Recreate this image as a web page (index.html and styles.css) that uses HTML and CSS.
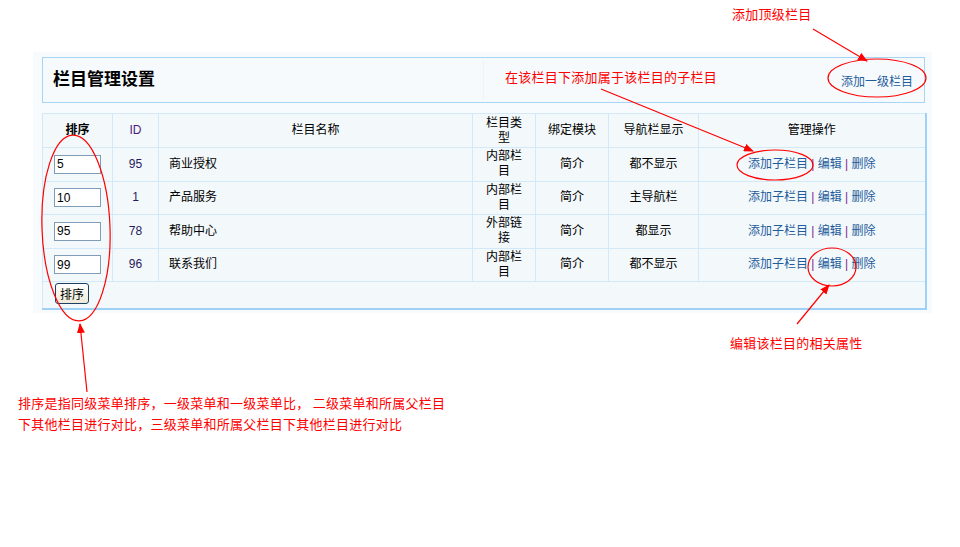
FILE: index.html
```html
<!DOCTYPE html>
<html lang="zh-CN">
<head>
    <meta charset="UTF-8">
    <meta name="viewport" content="width=device-width, initial-scale=1.0">
    <title>栏目管理设置</title>
    <link rel="stylesheet" href="styles.css">
</head>
<body>
<div class="page">

    <div class="panel">
        <!-- 标题栏 -->
        <div class="title-bar">
            <h2 class="title">栏目管理设置</h2>
            <div class="title-actions">
                <a href="#" class="link">添加一级栏目</a>
            </div>
        </div>

        <!-- 栏目列表 -->
        <form class="list-form">
            <table class="cat-table">
                <colgroup>
                    <col class="col-sort">
                    <col class="col-id">
                    <col class="col-name">
                    <col class="col-type">
                    <col class="col-module">
                    <col class="col-nav">
                    <col class="col-ops">
                </colgroup>
                <tr class="head">
                    <th><b>排序</b></th>
                    <th class="id-head">ID</th>
                    <th>栏目名称</th>
                    <th>栏目类型</th>
                    <th>绑定模块</th>
                    <th>导航栏显示</th>
                    <th>管理操作</th>
                </tr>
                <tr>
                    <td><input type="text" class="sort-input" value="5"></td>
                    <td class="id">95</td>
                    <td class="name">商业授权</td>
                    <td>内部栏目</td>
                    <td>简介</td>
                    <td>都不显示</td>
                    <td class="ops"><a href="#" class="link">添加子栏目</a> <span class="sep">|</span> <a href="#" class="link">编辑</a> <span class="sep">|</span> <a href="#" class="link">删除</a></td>
                </tr>
                <tr>
                    <td><input type="text" class="sort-input" value="10"></td>
                    <td class="id">1</td>
                    <td class="name">产品服务</td>
                    <td>内部栏目</td>
                    <td>简介</td>
                    <td>主导航栏</td>
                    <td class="ops"><a href="#" class="link">添加子栏目</a> <span class="sep">|</span> <a href="#" class="link">编辑</a> <span class="sep">|</span> <a href="#" class="link">删除</a></td>
                </tr>
                <tr>
                    <td><input type="text" class="sort-input" value="95"></td>
                    <td class="id">78</td>
                    <td class="name">帮助中心</td>
                    <td>外部链接</td>
                    <td>简介</td>
                    <td>都显示</td>
                    <td class="ops"><a href="#" class="link">添加子栏目</a> <span class="sep">|</span> <a href="#" class="link">编辑</a> <span class="sep">|</span> <a href="#" class="link">删除</a></td>
                </tr>
                <tr>
                    <td><input type="text" class="sort-input" value="99"></td>
                    <td class="id">96</td>
                    <td class="name">联系我们</td>
                    <td>内部栏目</td>
                    <td>简介</td>
                    <td>都不显示</td>
                    <td class="ops"><a href="#" class="link">添加子栏目</a> <span class="sep">|</span> <a href="#" class="link">编辑</a> <span class="sep">|</span> <a href="#" class="link">删除</a></td>
                </tr>
                <tr class="foot">
                    <td colspan="7"><input type="submit" class="btn" value="排序"></td>
                </tr>
            </table>
        </form>
    </div>

    <!-- 说明标注 -->
    <svg class="marks" width="960" height="547" viewBox="0 0 960 547">
        <defs>
            <marker id="head" markerWidth="10" markerHeight="8" refX="9" refY="4" orient="auto" markerUnits="userSpaceOnUse">
                <path d="M0,0 L10,4 L0,8 Z" fill="#f00"/>
            </marker>
        </defs>
        <g fill="none" stroke="#f00" stroke-width="1.2">
            <ellipse cx="877" cy="78" rx="49" ry="19"/>
            <ellipse cx="775" cy="165" rx="38" ry="15"/>
            <ellipse cx="832" cy="267" rx="24" ry="19"/>
            <ellipse cx="76" cy="228" rx="34" ry="93" transform="rotate(-2 76 228)"/>
            <line x1="813" y1="29" x2="867" y2="61" marker-end="url(#head)"/>
            <line x1="601" y1="89" x2="753" y2="151" marker-end="url(#head)"/>
            <line x1="797" y1="324" x2="829" y2="285" marker-end="url(#head)"/>
            <line x1="87" y1="392" x2="80" y2="324" marker-end="url(#head)"/>
        </g>
    </svg>
    <div class="note note-top">添加顶级栏目</div>
    <div class="note note-sub">在该栏目下添加属于该栏目的子栏目</div>
    <div class="note note-edit">编辑该栏目的相关属性</div>
    <div class="note note-sort">排序是指同级菜单排序，一级菜单和一级菜单比， 二级菜单和所属父栏目<br>下其他栏目进行对比，三级菜单和所属父栏目下其他栏目进行对比</div>

</div>
</body>
</html>
```

FILE: styles.css
```css
body {
    margin: 0;
    background: #fff;
    font-family: "Liberation Sans", "Noto Sans CJK SC", sans-serif;
    font-size: 12px;
    color: #000;
}
.page {
    position: relative;
    width: 960px;
    height: 547px;
    padding-top: 52px;
    box-sizing: border-box;
}
.panel {
    margin-left: 33px;
    width: 899px;
    padding: 5px 7px 3px 9px;
    box-sizing: border-box;
    background: #f8fbfd;
}
.title-bar {
    display: flex;
    align-items: center;
    height: 46px;
    box-sizing: border-box;
    border: 1px solid #a6d5f5;
    background: #f6fafc;
}
.title {
    flex: 0 0 430px;
    margin: 0;
    padding-left: 10px;
    height: 42px;
    line-height: 42px;
    font-size: 17px;
    font-weight: bold;
    border-right: 1px solid #eef3f6;
}
.title-actions {
    flex: 1;
    text-align: right;
    padding-right: 11px;
}
.link {
    color: #1f5c9c;
    text-decoration: none;
}
.sep {
    color: #7d1c8c;
}
.list-form {
    margin: 10px 0 0;
}
.cat-table {
    width: 883px;
    table-layout: fixed;
    border-collapse: collapse;
    border-top: 1px solid #a6d5f5;
    border-left: 1px solid #a6d5f5;
    border-right: 2px solid #9fd1f7;
    border-bottom: 2px solid #9fd1f7;
    background: #f3f8fb;
}
.col-sort { width: 70px; }
.col-id { width: 46px; }
.col-name { width: 314px; }
.col-type { width: 63px; }
.col-module { width: 73px; }
.col-nav { width: 90px; }
.col-ops { width: 227px; }
.cat-table th,
.cat-table td {
    box-sizing: border-box;
    border: 1px solid #d2e9f9;
    padding: 1px 8px;
    height: 33.5px;
    text-align: center;
    font-weight: normal;
    line-height: 15px;
}
.cat-table tr.head th {
    height: 34px;
}
.cat-table th b {
    font-weight: bold;
}
.cat-table th.id-head {
    color: #4a1a80;
}
.cat-table td.id {
    color: #2a1a60;
}
.cat-table td.name {
    text-align: left;
    padding-left: 10px;
}
.cat-table td.ops {
    padding: 1px 0;
}
.sort-input {
    width: 47px;
    height: 19px;
    box-sizing: border-box;
    border: 1px solid #7f9db9;
    padding: 1px 2px;
    font-family: "Liberation Sans", sans-serif;
    font-size: 12px;
    color: #000;
    background: #fff;
}
.cat-table tr.foot td {
    text-align: left;
    height: 27px;
    padding: 1px 12px 3px;
}
.btn {
    width: 34px;
    height: 21px;
    padding: 0;
    border: 1px solid #1c3f66;
    border-radius: 3px;
    background: linear-gradient(#ffffff, #ece9d8);
    font-family: "Noto Sans CJK SC", sans-serif;
    font-size: 12px;
    color: #000;
}
.marks {
    position: absolute;
    top: 0;
    left: 0;
    pointer-events: none;
}
.note {
    position: absolute;
    color: #f00;
    font-family: "Noto Sans CJK SC", sans-serif;
    font-size: 13px;
    line-height: 13px;
    letter-spacing: 0.25px;
    white-space: nowrap;
}
.note-top { left: 732px; top: 7px; }
.note-sub { left: 505px; top: 70px; }
.note-edit { left: 730px; top: 336px; }
.note-sort { left: 18px; top: 392px; line-height: 21px; }
```
